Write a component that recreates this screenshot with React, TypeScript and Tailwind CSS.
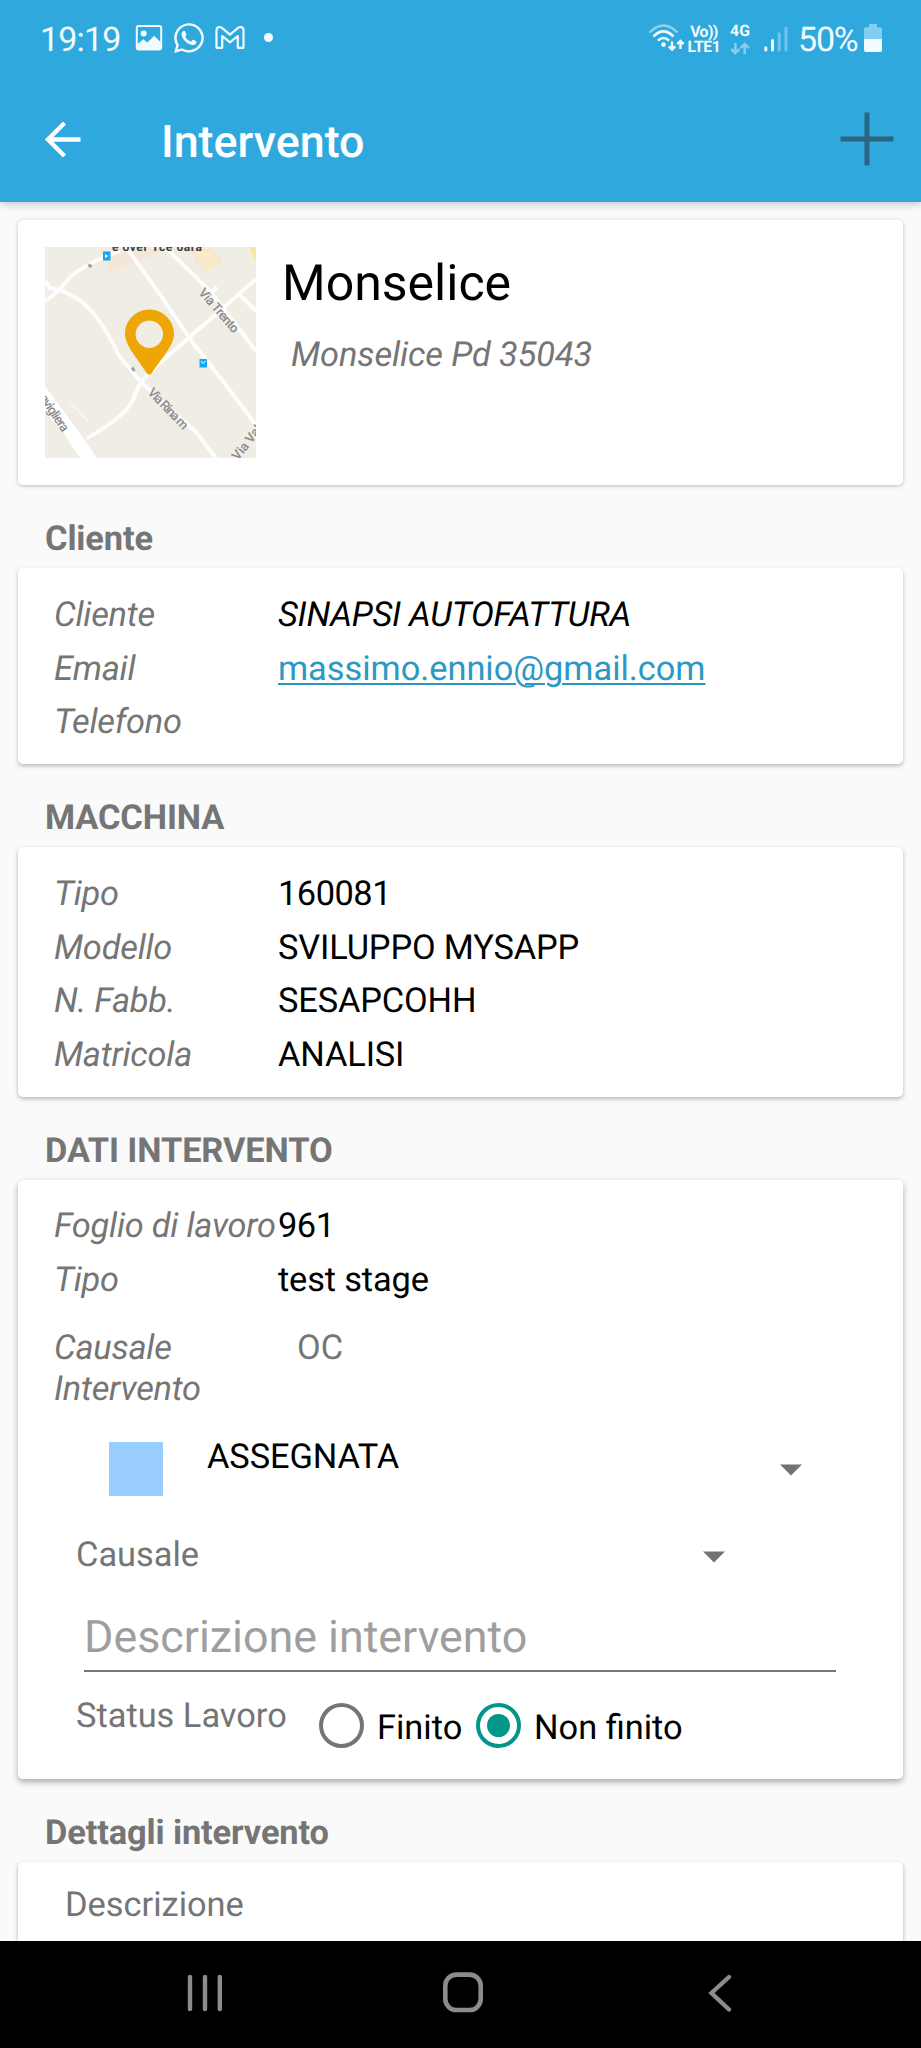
import type { ReactNode } from "react";
import { FaWhatsapp } from "react-icons/fa";

function StatusBar() {
  return (
    <div className="flex h-[78px] items-start justify-between pl-[40px] pr-[39px] text-[#f0faff]">
      <div className="flex items-start">
        <span className="mt-[20px] w-[84px] whitespace-nowrap text-[34px] leading-[40px] tracking-[-0.8px]">19:19</span>
        <svg className="ml-[11px] mt-[24px]" width="28" height="28" viewBox="0 0 28 28">
          <rect x="1.8" y="2" width="24.4" height="23.4" rx="2" fill="none" stroke="currentColor" strokeWidth="2" />
          <circle cx="8.7" cy="9.5" r="3" fill="currentColor" />
          <path d="M2 20.5 L8.3 15.2 L12.3 18.5 L19.2 11.8 L26 18.5 V25.5 H2 Z" fill="currentColor" />
        </svg>
        <FaWhatsapp className="ml-[9px] mt-[21px]" size={34} />
        <svg className="ml-[8px] mt-[25px]" width="32" height="25" viewBox="0 0 32 25">
          <path
            d="M2.5 5.2 Q2.5 2 5.6 2 L7.6 2.6 L16 9.6 L24.4 2.6 L26.4 2 Q29.5 2 29.5 5.2 V22.8 H23.8 V11 L16 17.4 L8.2 11 V22.8 H2.5 Z"
            fill="none"
            stroke="currentColor"
            strokeWidth="2.2"
            strokeLinejoin="round"
          />
        </svg>
        <span className="ml-[18px] mt-[33px] size-[9px] rounded-full bg-[#f0faff]" />
      </div>
      <div className="flex items-start">
        <svg className="mt-[23px]" width="38" height="30" viewBox="0 0 38 30" fill="none">
          <path d="M2.5 9.5 Q16.5 -4.5 30.5 9.5" stroke="#8fd2f0" strokeWidth="2.4" />
          <path d="M6.5 13.5 Q16.5 3.5 26.5 13.5" stroke="currentColor" strokeWidth="2.6" />
          <path d="M10.8 17.6 Q16.5 12.4 22.2 17.6" stroke="currentColor" strokeWidth="2.6" />
          <circle cx="16.5" cy="21.6" r="2.3" fill="currentColor" />
          <path d="M25 18.5 V26 M21.8 23.4 L25 26.6 L28.2 23.4 M33.5 26 V18.6 M30.3 21.2 L33.5 18 L36.7 21.2" stroke="currentColor" strokeWidth="2.4" />
        </svg>
        <div className="ml-[2px] mt-[24px] w-[34px] text-center text-[15.8px] font-bold leading-[15px]">
          <div className="whitespace-nowrap tracking-[-0.6px]">Vo))</div>
          <div className="whitespace-nowrap tracking-[-0.4px]">LTE1</div>
        </div>
        <div className="ml-[7px] mt-[24px] flex w-[24px] flex-col items-center text-[15.8px] font-bold leading-[14.5px]">
          <span>4G</span>
          <svg className="mt-[3px]" width="20" height="13" viewBox="0 0 20 13" fill="none" stroke="#85cdee" strokeWidth="2.6">
            <path d="M5.3 1 V11 M1.2 7 L5.3 11 L9.4 7 M14.7 12 V2 M10.6 6 L14.7 2 L18.8 6" />
          </svg>
        </div>
        <svg className="ml-[10px] mt-[25px]" width="26" height="28" viewBox="0 0 26 28" strokeWidth="3" strokeLinecap="round">
          <path d="M3.8 25 V22.8 M10.5 25 V15.5" stroke="currentColor" />
          <path d="M17.2 25 V8.8 M24 25 V3" stroke="#6fc5ec" />
        </svg>
        <span className="ml-[10px] mt-[20px] w-[62px] whitespace-nowrap text-[34px] leading-[40px] tracking-[-1.2px]">50%</span>
        <svg className="ml-[4px] mt-[24px]" width="18" height="28" viewBox="0 0 18 28">
          <path d="M5 0 H13 V3.3 H16.4 Q18 3.3 18 5 V16 H0 V5 Q0 3.3 1.6 3.3 H5 Z" fill="#82cdf0" />
          <path d="M0 15 H18 V26 Q18 28 16.2 28 H1.8 Q0 28 0 26 Z" fill="#f2fbff" />
        </svg>
      </div>
    </div>
  );
}

function Toolbar() {
  return (
    <div className="flex h-[124px] items-start">
      <svg className="ml-[44px] mt-[42px]" width="38" height="38" viewBox="0 0 38 38" fill="none" stroke="white" strokeWidth="4.4">
        <path d="M36.5 19.5 H5 M20.5 3 L4 19.5 L20.5 36" />
      </svg>
      <h1 className="ml-[79px] mt-[38px] whitespace-nowrap text-[44.8px] font-medium leading-[52px] text-white">Intervento</h1>
      <svg className="ml-auto mr-[27px] mt-[34px]" width="54" height="54" viewBox="0 0 54 54" stroke="#2a6680" strokeWidth="5">
        <path d="M27 0.5 V53.5 M0.5 27 H53.5" />
      </svg>
    </div>
  );
}

function MapThumb() {
  return (
    <svg className="size-[211px] shrink-0" viewBox="0 0 211 211" fill="none">
      <rect width="211" height="211" fill="#efede4" />
      <path d="M61 14 L80 4 L122 0 L98 14 L64 25 Z" fill="#f4e6d8" />
      <path d="M148 4 L168 2 L177 15 L160 23 L154 18 Z" fill="#fbeaca" stroke="#f2d8a0" strokeDasharray="2 3" />
      <path d="M204 0 H211 V16 Z" fill="#fce59e" />
      <g stroke="#fdfdfc" strokeWidth="4">
        <path d="M0 54 Q14 45 26 29 Q40 17 75 4" />
        <path d="M0 34 L5 41 Q36 46 55 75 Q64 88 74 109 L96 135 L118 156 L151 185 L171 211" />
        <path d="M81 0 Q116 48 148 96 Q180 136 211 178" />
        <path d="M120 0 L165 44 L211 104" />
        <path d="M42 191 Q84 168 90 148 Q94 134 115 116 L211 32" />
        <path d="M158 54 L172 40 M193 46 L211 64" />
        <path d="M25 155 L43 174" strokeWidth="2" stroke="#f6f5ef" />
      </g>
      <path d="M0 139 L34 185 L52 211 H35 L19 187 L0 165 Z" fill="#ffffff" />
      <g fill="#8b8b8c" fontSize="13" fontWeight="500" fontFamily="Roboto, sans-serif">
        <text x="67" y="3.5" textLength="90" fill="#3c3c3c" fontSize="12" fontWeight="bold">e over  Tce 0ara</text>
        <text transform="translate(153 46) rotate(49)" textLength="54">Via Trento</text>
        <text transform="translate(102 146) rotate(46)" textLength="52">Via Rina m</text>
        <text transform="translate(-6 151) rotate(56)" textLength="42">avigliera</text>
        <text transform="translate(193 214) rotate(-52)" textLength="40">Via Val</text>
      </g>
      <rect x="58" y="4.5" width="7.5" height="9" fill="#14a5ee" />
      <path d="M60 7 L63.5 9 L60 11 Z" fill="#ffffff" />
      <rect x="154.5" y="112" width="7.5" height="8.5" fill="#14a9f5" />
      <path d="M156 114 L158.2 116.5 L160.5 114" stroke="#ffffff" />
      <path d="M43.5 17.5 L46.5 20 M87 120.5 L89.5 124" stroke="#9aa0ac" strokeWidth="3" />
      <path
        fillRule="evenodd"
        d="M104.3 62.5 C118 62.5 129 73.5 129 87 C129 98.5 117 110.5 106.5 126.5 Q104.3 129 102 126.5 C92 110.5 80 98.5 80 87 C80 73.5 91 62.5 104.3 62.5 Z M104.3 73.5 A13.7 13.7 0 1 0 104.31 73.5 Z"
        fill="#eda604"
      />
    </svg>
  );
}

function SectionTitle({ children }: { children: ReactNode }) {
  return (
    <h2 className="h-[83px] shrink-0 whitespace-nowrap pl-[45px] pt-[34px] text-[34.4px] font-bold leading-[40px] tracking-[-0.12px] text-[#757575]">
      {children}
    </h2>
  );
}

function Card({ className, children }: { className: string; children: ReactNode }) {
  return <section className={`mx-[18px] shrink-0 rounded-[5px] bg-white ${className}`}>{children}</section>;
}

function Field({ label, children }: { label: string; children?: ReactNode }) {
  return (
    <div className="flex h-[53.7px] whitespace-nowrap pl-[36px] leading-[53.7px]">
      <span className="w-[224px] shrink-0 italic tracking-[-0.25px] text-[#757575]">{label}</span>
      <span className="tracking-[-0.15px] text-black">{children}</span>
    </div>
  );
}

function Caret() {
  return (
    <svg width="22" height="12" viewBox="0 0 22 12">
      <path d="M0 0.5 H22 L11 11.5 Z" fill="#737373" />
    </svg>
  );
}

function Radio({ checked = false }: { checked?: boolean }) {
  return (
    <span
      className={`flex size-[45px] shrink-0 items-center justify-center rounded-full border-4 ${
        checked ? "border-[#009688]" : "border-[#757575]"
      }`}
    >
      {checked && <span className="size-[23px] rounded-full bg-[#009688]" />}
    </span>
  );
}

function NavigationBar() {
  return (
    <nav className="flex h-[107px] shrink-0 items-start bg-black">
      <svg className="ml-[185px] mt-[32px]" width="40" height="40" viewBox="0 0 40 40" stroke="#8c8c8c" strokeWidth="4.4" strokeLinecap="round">
        <path d="M5 4 V36 M20 4 V36 M34.8 4 V36" />
      </svg>
      <svg className="ml-[217px] mt-[30px]" width="42" height="42" viewBox="0 0 42 42" fill="none">
        <rect x="3.3" y="3.6" width="35.4" height="35.4" rx="11" stroke="#8c8c8c" strokeWidth="4.6" />
      </svg>
      <svg className="ml-[219px] mt-[32px]" width="34" height="40" viewBox="0 0 34 40" fill="none" stroke="#8c8c8c" strokeWidth="4.4" strokeLinecap="round">
        <path d="M26 4 L8.5 20 L26 36.5" />
      </svg>
    </nav>
  );
}

export default function App() {
  return (
    <div className="flex h-[2048px] w-[921px] flex-col overflow-hidden bg-[#fafafa] font-['Roboto',sans-serif] text-[34.4px] leading-[40px] [text-rendering:geometricPrecision]">
      <header className="z-10 h-[202px] shrink-0 bg-[#2fa9dd] shadow-[0_2px_8px_rgba(0,0,0,0.22)]">
        <StatusBar />
        <Toolbar />
      </header>

      <main className="flex h-[1739px] flex-col overflow-hidden pt-[18px]">
        <Card className="flex h-[265px] items-start pl-[27px] pt-[27px] shadow-[0_1px_4px_rgba(0,0,0,0.24)]">
          <MapThumb />
          <div className="flex flex-col pl-[26px] pt-[8px]">
            <p className="whitespace-nowrap text-[50px] leading-[59px] text-black">Monselice</p>
            <p className="mt-[21px] whitespace-nowrap pl-[9px] italic tracking-[-0.1px] text-[#757575]">Monselice Pd 35043</p>
          </div>
        </Card>

        <SectionTitle>Cliente</SectionTitle>
        <Card className="h-[196px] pt-[21px] shadow-[0_2px_4px_rgba(0,0,0,0.26)]">
          <Field label="Cliente">
            <span className="italic tracking-[-0.25px]">SINAPSI AUTOFATTURA</span>
          </Field>
          <Field label="Email">
            <a className="tracking-[-0.04px] text-[#2c98c3] underline decoration-[2px] underline-offset-[3px]">massimo.ennio@gmail.com</a>
          </Field>
          <Field label="Telefono" />
        </Card>

        <SectionTitle>MACCHINA</SectionTitle>
        <Card className="h-[250px] pt-[21px] shadow-[0_2px_4px_rgba(0,0,0,0.28)]">
          <Field label="Tipo">
            <span className="tracking-[-0.5px]">160081</span>
          </Field>
          <Field label="Modello">SVILUPPO MYSAPP</Field>
          <Field label="N. Fabb.">SESAPCOHH</Field>
          <Field label="Matricola">ANALISI</Field>
        </Card>

        <SectionTitle>DATI INTERVENTO</SectionTitle>
        <Card className="flex h-[599px] flex-col pt-[20px] shadow-[0_3px_6px_rgba(0,0,0,0.32)]">
          <Field label="Foglio di lavoro">
            <span className="tracking-[-0.5px]">961</span>
          </Field>
          <Field label="Tipo">test stage</Field>
          <div className="mt-[21px] flex pl-[36px] leading-[40.3px] text-[#757575]">
            <span className="w-[243px] shrink-0 pr-[40px] italic tracking-[-0.25px]">Causale Intervento</span>
            <span>OC</span>
          </div>
          <div className="mt-[28px] flex h-[73px] items-start pl-[91px]">
            <span className="mt-[5px] size-[54px] bg-[#99ccff]" />
            <span className="ml-[44px] w-[573px] tracking-[-0.1px] text-black">ASSEGNATA</span>
            <span className="mt-[27px] flex">
              <Caret />
            </span>
          </div>
          <div className="mt-[25px] flex h-[39px] items-start pl-[58px]">
            <span className="w-[627px] text-[#757575]">Causale</span>
            <span className="mt-[16px] flex">
              <Caret />
            </span>
          </div>
          <div className="ml-[66px] mt-[27px] h-[71px] w-[752px] border-b-[2px] border-[#757575] pt-[10px] text-[44.8px] leading-[52px] text-[#9e9e9e]">
            Descrizione intervento
          </div>
          <div className="mt-[24px] flex items-start whitespace-nowrap pl-[58px]">
            <span className="w-[243px] text-[#757575]">Status Lavoro</span>
            <span className="mt-[7px] flex">
              <Radio />
            </span>
            <span className="ml-[13px] mt-[12px] w-[99px] text-black">Finito</span>
            <span className="mt-[7px] flex">
              <Radio checked />
            </span>
            <span className="ml-[13px] mt-[12px] text-black">Non finito</span>
          </div>
        </Card>

        <SectionTitle>Dettagli intervento</SectionTitle>
        <Card className="h-[120px] pl-[47px] pt-[23px] text-[#757575] shadow-[0_2px_4px_rgba(0,0,0,0.3)]">Descrizione</Card>
      </main>

      <NavigationBar />
    </div>
  );
}
